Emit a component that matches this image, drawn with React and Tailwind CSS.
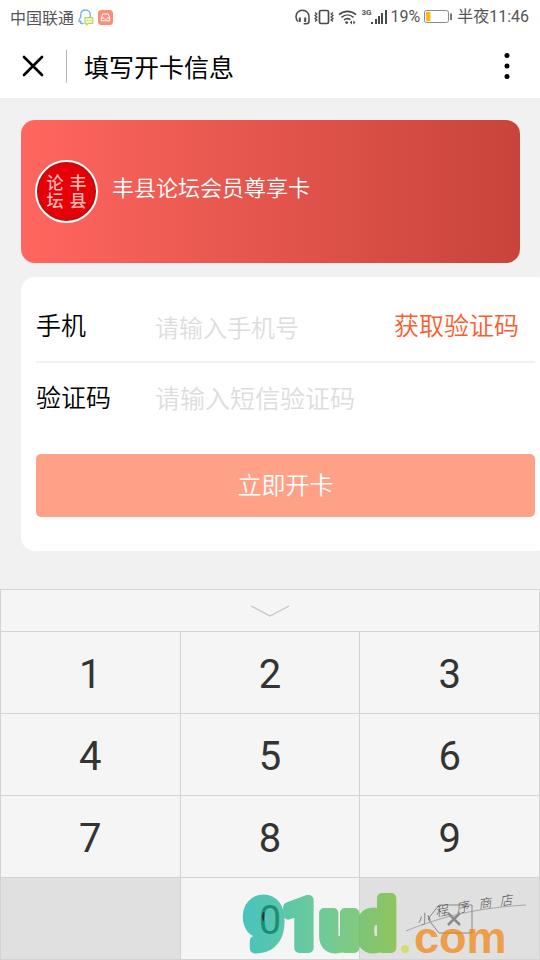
import { useState } from "react";

const KEYS = ["1", "2", "3", "4", "5", "6", "7", "8", "9"];

function QQIcon() {
  return (
    <svg width="16" height="17" viewBox="0 0 16 17" fill="none">
      <path
        d="M5 14.5H3.2c-.8 0-.9-.9-.3-1.6L2.300 12c-.5.6-1.400.9-1.400.1 0-1.600.8-2.900 1.800-3.800V6C2.700 3 4.700 1 7.500 1s4.800 2 4.800 5v2"
        stroke="#73aef5"
        strokeWidth="1.300"
        strokeLinecap="round"
        strokeLinejoin="round"
      />
      <path d="M7 8.600h7.800v5.800h-4.600l-1.800 1.800v-1.800H7z" fill="#f2f8d4" stroke="#b9d956" strokeWidth="1.200" strokeLinejoin="round" />
      <path d="M9 11.500h1M10.700 11.500h1M12.400 11.500h1" stroke="#b9d956" />
    </svg>
  );
}

function InboxBadge() {
  return (
    <svg width="15" height="15" viewBox="0 0 15 15" fill="none">
      <rect width="15" height="15" rx="3.500" fill="#fd8c78" />
      <path d="M4.800 4h5.400l1.500 3.800v3H3.300v-3z" stroke="#fff" strokeLinejoin="round" />
      <path d="M3.500 7.800h2c.2 1.200 1 1.600 2 1.600s1.800-.4 2-1.600h2" stroke="#fff" />
    </svg>
  );
}

function HeadsetIcon() {
  return (
    <svg width="15" height="16" viewBox="0 0 15 16" fill="none" stroke="#4a4a4a">
      <path d="M3 12.500C1.700 11.400 1 9.700 1 7.800 1 4 3.900 1.200 7.500 1.200S14 4 14 7.800v4.400c0 1.700-1 2.500-2.800 2.500H8.700" strokeWidth="1.500" />
      <path d="M4.800 8.400v4.600M10.200 8.400v4.600" strokeWidth="2" />
    </svg>
  );
}

function VibrateIcon() {
  return (
    <svg width="20" height="16" viewBox="0 0 20 16" fill="none" stroke="#4a4a4a">
      <rect x="5.500" y="1.500" width="9" height="13" rx="1.500" strokeWidth="1.700" />
      <path d="M1 3.500l1.800 1.500L1 6.500 2.800 8 1 9.500 2.800 11 1 12.500M19 3.500L17.200 5 19 6.500 17.200 8 19 9.500 17.200 11l1.800 1.500" strokeWidth="1.400" />
    </svg>
  );
}

function WifiIcon() {
  return (
    <svg width="19" height="15" viewBox="0 0 19 15" fill="none" stroke="#4a4a4a" strokeWidth="1.600">
      <path d="M1 4.700C6 .2 13 .2 18 4.700M3.500 7.400c3.600-3.200 8.400-3.200 12 0M6 10c2-1.700 4.500-1.700 6.500-.3" />
      <circle cx="8.700" cy="12.600" r="1.400" fill="#4a4a4a" stroke="none" />
      <path d="M14 10.400v4l-2.200-2zM15.300 10.400v4l2.200-2z" fill="#4a4a4a" stroke="none" />
    </svg>
  );
}

function SignalIcon() {
  return (
    <svg width="17" height="16" viewBox="0 0 17 16" fill="#4a4a4a">
      <rect x="0" y="13" width="2" height="2" />
      <rect x="4" y="10" width="2" height="5" />
      <rect x="7" y="7" width="2" height="8" />
      <rect x="10" y="4" width="2" height="11" />
      <rect x="14" y="1" width="2" height="14" />
    </svg>
  );
}

function BatteryIcon() {
  return (
    <svg width="28" height="14" viewBox="0 0 28 14" fill="none">
      <rect x=".5" y=".5" width="24" height="12" rx="2" stroke="#8a8a8a" />
      <rect x="2" y="2" width="4.500" height="9" fill="#fdb913" />
      <path d="M27 3.500v6.500" stroke="#4a4a4a" strokeWidth="1.500" />
    </svg>
  );
}

function StatusBar() {
  return (
    <div className="flex h-[34px] items-center justify-between pl-[10px] pr-[11px] text-[16px] leading-6 text-[#555]">
      <div className="flex items-center">
        <span className="mr-1">中国联通</span>
        <QQIcon />
        <span className="ml-1">
          <InboxBadge />
        </span>
      </div>
      <div className="flex items-center">
        <HeadsetIcon />
        <span className="ml-1">
          <VibrateIcon />
        </span>
        <span className="ml-1">
          <WifiIcon />
        </span>
        <span className="ml-1 self-start font-['Roboto',sans-serif] text-[8px] font-bold leading-4">3G</span>
        <SignalIcon />
        <span className="ml-[2px] font-['Roboto',sans-serif]">19%</span>
        <span className="ml-1">
          <BatteryIcon />
        </span>
        <span className="ml-[5px] font-['Roboto','Noto_Sans_CJK_SC',sans-serif]">半夜11:46</span>
      </div>
    </div>
  );
}

function NavBar() {
  return (
    <header className="flex h-[65px] items-center border-b border-[#eee] pl-[22px] pr-6">
      <button type="button" aria-label="关闭">
        <svg width="22" height="22" viewBox="0 0 22 22" stroke="#000" strokeWidth="2.600" strokeLinecap="round">
          <path d="M2 2l18 18M20 2L2 20" />
        </svg>
      </button>
      <span className="ml-[22px] h-[33px] w-px bg-[#b5b5b5]" />
      <h1 className="ml-[17px] flex-1 pb-px text-[25px] leading-8 text-black">填写开卡信息</h1>
      <button type="button" aria-label="更多">
        <svg width="18" height="28" viewBox="0 0 18 28">
          <circle cx="9" cy="3.500" r="2.500" />
          <circle cx="9" cy="14" r="2.500" />
          <circle cx="9" cy="24.500" r="2.500" />
        </svg>
      </button>
    </header>
  );
}

function MemberCard() {
  return (
    <section className="flex h-[143px] items-center rounded-[14px] bg-linear-to-r from-[#ff665e] to-[#c8443b] px-[14px]">
      <div className="grid size-[63px] place-content-center grid-cols-[17px_17px] gap-x-[6px] rounded-full border-2 border-white bg-[#e60008] pb-px text-center text-[17px] font-medium leading-[18px] text-[#ffb8b0] shadow-[inset_0_0_2px_1px_#8f1c1c]">
        <span>论</span>
        <span>丰</span>
        <span>坛</span>
        <span>县</span>
      </div>
      <h2 className="mb-3 ml-[14px] text-[22px] font-[350] leading-8 text-white">丰县论坛会员尊享卡</h2>
    </section>
  );
}

function CardForm() {
  const [phone, setPhone] = useState("");
  const [code, setCode] = useState("");

  return (
    <form
      className="mt-[14px] box-content w-full rounded-[14px] bg-white px-[15px] pb-[34px] pt-3 font-[350]"
      onSubmit={(e) => e.preventDefault()}
    >
      <div className="flex h-[74px] items-center border-b-2 border-[#f2f2f2]">
        <label htmlFor="phone" className="w-[119px] shrink-0 pb-[3px] text-[25px] leading-8 text-black">手机</label>
        <input
          id="phone"
          type="tel"
          value={phone}
          onChange={(e) => setPhone(e.target.value)}
          placeholder="请输入手机号"
          className="mt-1 min-w-0 flex-1 text-[24px] leading-8 outline-none placeholder:text-[#ddd]"
        />
        <button type="button" className="mr-4 shrink-0 pb-[3px] text-[25px] leading-8 text-[#ff5c2e]">获取验证码</button>
      </div>
      <div className="flex h-[68px] items-center">
        <label htmlFor="code" className="w-[119px] shrink-0 pb-[3px] text-[25px] leading-8 text-black">验证码</label>
        <input
          id="code"
          type="text"
          value={code}
          onChange={(e) => setCode(e.target.value)}
          placeholder="请输入短信验证码"
          className="min-w-0 flex-1 text-[25px] leading-8 outline-none placeholder:text-[#ddd]"
        />
      </div>
      <button type="submit" className="mt-[23px] h-[63px] w-full rounded-[5px] bg-[#ffa186] pb-1 text-[24px] leading-8 text-white">
        立即开卡
      </button>
    </form>
  );
}

function Watermark() {
  return (
    <svg className="pointer-events-none absolute bottom-0 right-0 h-[80px] w-[300px]" viewBox="0 0 300 80">
      <defs>
        <linearGradient id="brand" gradientUnits="userSpaceOnUse" x1="3" y1="0" x2="153" y2="0">
          <stop offset="0" stopColor="#00afa5" />
          <stop offset="0.5" stopColor="#35b875" />
          <stop offset="1" stopColor="#6cbb2c" />
        </linearGradient>
      </defs>
      <g opacity="0.7" fontWeight="700">
        <text
          x="5"
          y="68"
          fontSize="66"
          fontFamily="Roboto, sans-serif"
          fill="url(#brand)"
          stroke="url(#brand)"
          strokeWidth="10"
          strokeLinejoin="round"
        >
          91ud
        </text>
        <circle cx="165" cy="69" r="4" fill="#d3dd3d" />
        <text x="174" y="73" fontSize="45" fontFamily="'Liberation Sans', sans-serif" fill="#f48208">
          com
        </text>
      </g>
      <g fill="#555" fontSize="13" fontWeight="300" fontStyle="italic" fontFamily="'Noto Sans CJK SC', sans-serif">
        <text x="178" y="45" rotate="-12">小</text>
        <text x="196" y="37" rotate="-12">程</text>
        <text x="217" y="33" rotate="-12">序</text>
        <text x="239" y="29" rotate="-8">商</text>
        <text x="260" y="26" rotate="-8">店</text>
      </g>
      <path d="M166 51C200 37 236 28 286 25" fill="none" stroke="#999" strokeWidth="0.800" />
    </svg>
  );
}

function Keypad() {
  const keyClass =
    "flex h-[82px] items-center justify-center border-b border-r border-[#d3d3d3] pt-1 text-[40px] leading-10 text-[#333]";

  return (
    <section className="relative mt-auto border-l border-t border-[#d3d3d3] bg-[#f5f5f5] font-['Roboto',sans-serif]">
      <button type="button" aria-label="收起键盘" className="flex h-[42px] w-full items-center justify-center border-b border-r border-[#d3d3d3]">
        <svg width="40" height="12" viewBox="0 0 40 12" fill="none" stroke="#c4c4c4" strokeWidth="1.300">
          <path d="M1 1l19 10L39 1" />
        </svg>
      </button>
      <div className="grid grid-cols-3">
        {KEYS.map((key) => (
          <button key={key} type="button" className={keyClass}>
            {key}
          </button>
        ))}
        <div className="border-b border-r border-[#d3d3d3] bg-[#e0e0e0]" />
        <button type="button" className={keyClass}>0</button>
        <button type="button" aria-label="删除" className="flex items-center justify-center border-b border-r border-[#d3d3d3] bg-[#e0e0e0]">
          <svg width="46" height="30" viewBox="0 0 46 30" fill="none">
            <path d="M12 1h33v28H12L1 15z" stroke="#888" />
            <path d="M21 9l12 12M33 9L21 21" stroke="#8a8a8a" strokeWidth="2.500" />
          </svg>
        </button>
      </div>
      <Watermark />
    </section>
  );
}

export default function App() {
  return (
    <div className="flex min-h-screen flex-col overflow-hidden bg-[#f1f1f1] font-['Noto_Sans_CJK_SC',sans-serif]">
      <div className="bg-white">
        <StatusBar />
        <NavBar />
      </div>
      <main className="pb-9 pl-[21px] pr-5 pt-[21px]">
        <MemberCard />
        <CardForm />
      </main>
      <Keypad />
    </div>
  );
}
